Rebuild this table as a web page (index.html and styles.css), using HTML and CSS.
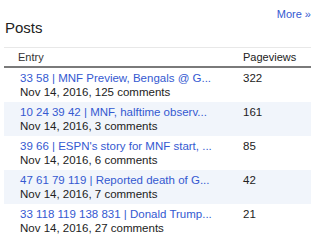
FILE: index.html
```html
<!DOCTYPE html>
<html>
<head>
<meta charset="utf-8">
<link rel="stylesheet" href="styles.css">
</head>
<body>
<div class="widget">
  <div class="more-row"><a class="more" href="#">More »</a></div>
  <h2 class="title">Posts</h2>
  <div class="table">
    <div class="head">
      <div class="c1">Entry</div>
      <div class="c2">Pageviews</div>
    </div>
    <div class="row">
      <div class="c1"><a href="#">33 58 | MNF Preview, Bengals @ G...</a><div class="meta">Nov 14, 2016, 125 comments</div></div>
      <div class="c2">322</div>
    </div>
    <div class="row alt">
      <div class="c1"><a href="#">10 24 39 42 | MNF, halftime observ...</a><div class="meta">Nov 14, 2016, 3 comments</div></div>
      <div class="c2">161</div>
    </div>
    <div class="row">
      <div class="c1"><a href="#">39 66 | ESPN's story for MNF start, ...</a><div class="meta">Nov 14, 2016, 6 comments</div></div>
      <div class="c2">85</div>
    </div>
    <div class="row alt">
      <div class="c1"><a href="#">47 61 79 119 | Reported death of G...</a><div class="meta">Nov 14, 2016, 7 comments</div></div>
      <div class="c2">42</div>
    </div>
    <div class="row">
      <div class="c1"><a href="#">33 118 119 138 831 | Donald Trump...</a><div class="meta">Nov 14, 2016, 27 comments</div></div>
      <div class="c2">21</div>
    </div>
  </div>
</div>
</body>
</html>
```
FILE: styles.css
```css
html, body {
  margin: 0;
  padding: 0;
  background: #fff;
}
body {
  font-family: "Liberation Sans", Arial, sans-serif;
  color: #222;
}
.widget {
  padding: 8px 9px 0 4px;
}
.more-row {
  display: flex;
  justify-content: flex-end;
  padding-right: 0;
}
.more {
  font-size: 11px;
  line-height: 12px;
  color: #3459d1;
  text-decoration: none;
}
.title {
  margin: 0;
  font-size: 15px;
  line-height: 16px;
  font-weight: normal;
  color: #222;
  padding-left: 1px;
}
.table {
  margin-top: 11px;
  border-top: 1px solid #e8e8e8;
}
.head {
  display: grid;
  grid-template-columns: 239px 1fr;
  height: 18px;
  line-height: 18px;
  font-size: 11px;
  color: #333;
  border-bottom: 2px solid #7a7a7a;
}
.head .c1 {
  padding-left: 14px;
}
.row {
  display: grid;
  grid-template-columns: 239px 1fr;
  padding: 3px 0;
  font-size: 11.5px;
  line-height: 14px;
}
.row.alt {
  background: #f1f5fb;
}
.row .c1 {
  padding-left: 16px;
}
.row a {
  color: #3459d1;
  text-decoration: none;
  white-space: nowrap;
}
.meta {
  color: #222;
}
.c2 {
  color: #222;
}
```
